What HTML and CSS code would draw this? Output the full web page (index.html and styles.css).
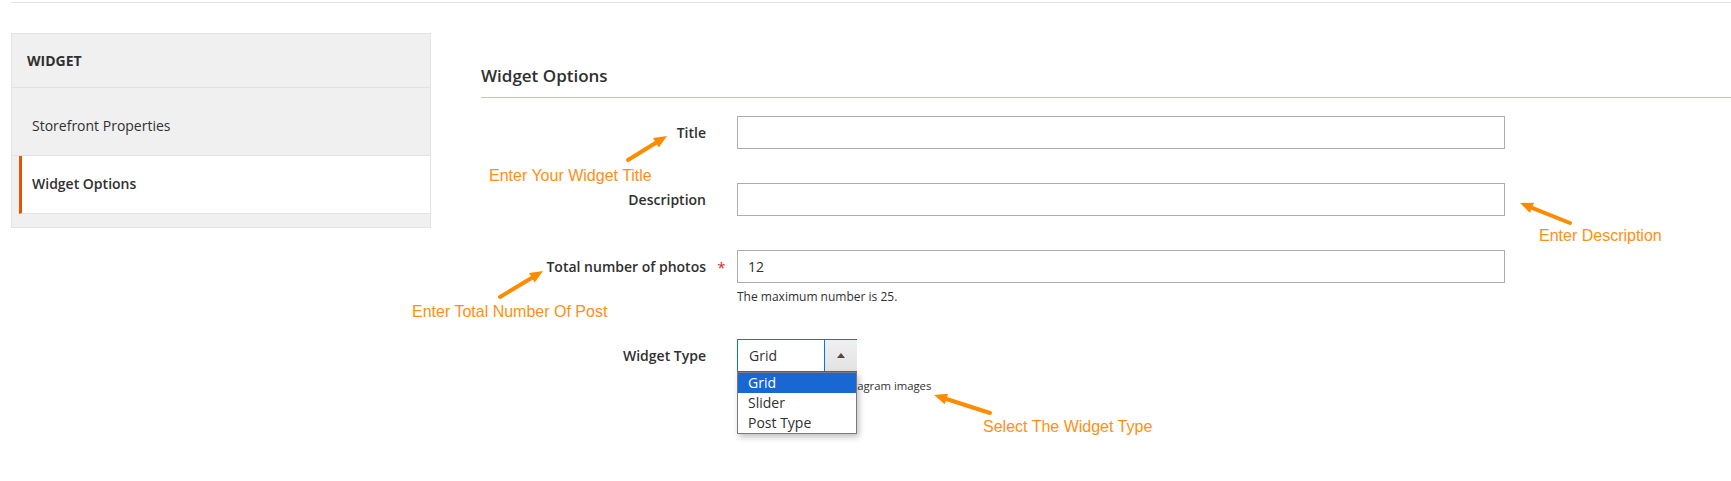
FILE: index.html
```html
<!DOCTYPE html>
<html lang="en">
<head>
<meta charset="utf-8">
<title>Widget Options</title>
<link rel="stylesheet" href="styles.css">
</head>
<body>
  <div class="topline"></div>
  <div class="page">
    <aside class="sidebar">
      <div class="side-head">WIDGET</div>
      <div class="side-item">Storefront Properties</div>
      <div class="side-item active">Widget Options</div>
      <div class="side-foot"></div>
    </aside>
    <main class="main">
      <div class="legend">Widget Options</div>
      <div class="field">
        <label class="label">Title</label>
        <span class="req"></span>
        <input class="input" type="text" value="">
      </div>
      <div class="field">
        <label class="label">Description</label>
        <span class="req"></span>
        <input class="input" type="text" value="">
      </div>
      <div class="field">
        <label class="label">Total number of photos</label>
        <span class="req">*</span>
        <input class="input" type="text" value="12">
        <div class="note">The maximum number is 25.</div>
      </div>
      <div class="field">
        <label class="label">Widget Type</label>
        <span class="req"></span>
        <div class="select-wrap">
          <div class="select">
            <span class="select-value">Grid</span>
            <span class="select-btn"><span class="tri"></span></span>
          </div>
          <ul class="options">
            <li class="opt selected">Grid</li>
            <li class="opt">Slider</li>
            <li class="opt">Post Type</li>
          </ul>
        </div>
        <div class="note note-compact">Display the type of Instagram images</div>
      </div>
    </main>
  </div>

  <svg class="arrows" width="1731" height="481" viewBox="0 0 1731 481">
    <g stroke="#ff8c00" stroke-width="4" stroke-linecap="round" fill="none">
      <line x1="628" y1="160" x2="656" y2="142.8"/>
      <line x1="500" y1="297" x2="532" y2="277.7"/>
      <line x1="1570" y1="223" x2="1532" y2="207.8"/>
      <line x1="990" y1="413" x2="946.4" y2="399"/>
    </g>
    <g fill="#ff8c00">
      <polygon points="667,136 658.8,147.5 653,138.1"/>
      <polygon points="543,271 534.7,282.4 529,273"/>
      <polygon points="1520,203 1534.1,202.7 1530,212.9"/>
      <polygon points="934,395 948.1,393.8 944.7,404.2"/>
    </g>
  </svg>
  <div class="anno anno-title">Enter Your Widget Title</div>
  <div class="anno anno-total">Enter Total Number Of Post</div>
  <div class="anno anno-desc">Enter Description</div>
  <div class="anno anno-type">Select The Widget Type</div>
</body>
</html>
```
FILE: styles.css
```css
* { box-sizing: border-box; }

body {
  margin: 0;
  position: relative;
  width: 1731px;
  height: 481px;
  overflow: hidden;
  background: #fff;
  font-family: "Open Sans", "DejaVu Sans", sans-serif;
  font-size: 14px;
  color: #303030;
}

.topline {
  margin: 2px 0 0 11px;
  border-top: 1px solid #e3e3e3;
}

.page {
  display: flex;
  align-items: flex-start;
  padding-left: 11px;
  margin-top: 30px;
}

.sidebar {
  width: 420px;
  flex: none;
  border: 1px solid #e3e3e3;
  background: #f0f0f0;
}

.side-head {
  height: 53px;
  line-height: 53px;
  padding-left: 15px;
  font-weight: 700;
  font-size: 14px;
  color: #303030;
}

.side-item {
  border-top: 1px solid #e3e3e3;
  border-bottom: 1px solid #e3e3e3;
  padding: 28px 0 19px 20px;
  line-height: 20px;
}

.side-item.active {
  border-top: 0;
  margin-left: 7px;
  border-left: 3px solid #eb5202;
  background: #fff;
  padding: 18px 0 19px 10px;
  font-weight: 600;
}

.side-foot {
  height: 13px;
}

.main {
  flex: 1;
  margin-left: 50px;
}

.legend {
  margin-top: 31px;
  font-size: 17px;
  line-height: 24px;
  font-weight: 600;
  color: #303030;
  padding-bottom: 9px;
  border-bottom: 1px solid #cac3b4;
  margin-bottom: 18px;
}

.field {
  display: grid;
  grid-template-columns: 225px 31px 768px;
  margin-bottom: 34px;
}

.label {
  text-align: right;
  font-weight: 600;
  line-height: 33px;
}

.req {
  color: #e22626;
  text-align: center;
  font-size: 15px;
  line-height: 31px;
  padding-top: 2px;
}

.input {
  height: 33px;
  width: 768px;
  border: 1px solid #adadad;
  border-radius: 0;
  padding: 0 10px;
  font-family: inherit;
  font-size: 14px;
  color: #303030;
  outline: none;
}

.note {
  grid-column: 3;
  margin-top: 5px;
  font-size: 12px;
  line-height: 17px;
  color: #303030;
}

.note-compact {
  font-size: 11.3px;
}

.select-wrap {
  position: relative;
  width: 120px;
}

.select {
  display: flex;
  height: 33px;
  border: 1px solid #007bdb;
  background: #fff;
}

.select-value {
  flex: 1;
  padding-left: 11px;
  line-height: 31px;
}

.select-btn {
  width: 33px;
  margin-right: -1px;
  border-left: 1px solid #007bdb;
  background: linear-gradient(#f0f0f0, #e3e3e3);
  display: flex;
  align-items: center;
  justify-content: center;
}

.tri {
  width: 0;
  height: 0;
  border-left: 4px solid transparent;
  border-right: 4px solid transparent;
  border-bottom: 5px solid #514943;
}

.options {
  position: absolute;
  top: 33px;
  left: 0;
  width: 120px;
  margin: 0;
  padding: 0;
  list-style: none;
  background: #fff;
  border: 1px solid #7a7a7a;
  box-shadow: 2px 3px 6px rgba(0, 0, 0, 0.25);
  z-index: 2;
}

.opt {
  height: 20px;
  line-height: 20px;
  padding-left: 10px;
  font-size: 14px;
  color: #303030;
}

.opt.selected {
  background: #1967d2;
  color: #fff;
}

.arrows {
  position: absolute;
  left: 0;
  top: 0;
  pointer-events: none;
}

.anno {
  position: absolute;
  font-family: "Liberation Sans", Arial, sans-serif;
  font-size: 16px;
  line-height: 18px;
  color: #ff8f12;
  white-space: nowrap;
}

.anno-title { left: 489px; top: 167px; }
.anno-total { left: 412px; top: 303px; }
.anno-desc { left: 1539px; top: 227px; }
.anno-type { left: 983px; top: 418px; }
```
